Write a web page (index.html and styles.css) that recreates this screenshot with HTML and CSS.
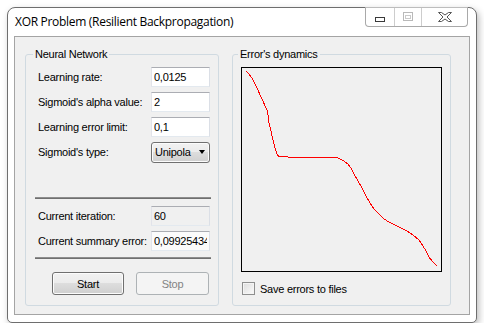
FILE: index.html
```html
<!DOCTYPE html>
<html lang="en">
<head>
<meta charset="UTF-8">
<title>XOR Problem (Resilient Backpropagation)</title>
<link rel="stylesheet" href="styles.css">
</head>
<body>

<div class="window">
  <div class="titlebar">
    <span class="title">XOR Problem (Resilient Backpropagation)</span>
    <div class="caption-btns">
      <span class="cbtn min"><svg width="10" height="5"><rect x="0.5" y="0.5" width="9" height="4" fill="#fff" stroke="#3a3a3a"/></svg></span>
      <span class="cbtn max"><svg width="10" height="9"><rect x="0.5" y="0.5" width="9" height="8" fill="none" stroke="#b9b9b9"/><rect x="2.5" y="3.5" width="5" height="3" fill="none" stroke="#cacaca"/></svg></span>
      <span class="cbtn close"><svg width="14" height="10"><polygon points="0.5,0.5 3.5,0.5 7,3 10.5,0.5 13.5,0.5 9,5 13.5,9.5 10.5,9.5 7,7 3.5,9.5 0.5,9.5 5,5" fill="#fff" stroke="#555"/></svg></span>
    </div>
  </div>

  <div class="client">
    <fieldset class="group net">
      <legend>Neural Network</legend>
      <div class="params">
        <label>Learning rate:</label><input class="tb" value="0,0125">
        <label>Sigmoid's alpha value:</label><input class="tb" value="2">
        <label>Learning error limit:</label><input class="tb" value="0,1">
        <label>Sigmoid's type:</label>
        <div class="combo"><span>Unipola</span><i class="arrow"></i></div>
      </div>
      <div class="sep first"></div>
      <div class="params status">
        <label>Current iteration:</label><input class="tb ro" value="60" readonly>
        <label>Current summary error:</label><input class="tb ro white" value="0,09925434" readonly>
      </div>
      <div class="sep second"></div>
      <div class="actions">
        <button class="btn start">Start</button>
        <button class="btn stop" disabled>Stop</button>
      </div>
    </fieldset>

    <fieldset class="group dyn">
      <legend>Error's dynamics</legend>
      <div class="chart">
        <svg width="199" height="203" shape-rendering="crispEdges">
          <polyline fill="none" stroke="#ff0000" stroke-width="1"
            points="4,3 7,6 10,10 13,16 16,22 18,27 21,33 23,38 25,42 26,47 27,55 29,63 31,72 33,80 35,86 37,89 40,88 46,89 84,89 96,90 102,93 106,96 109,100 112,106 116,113 120,120 124,128 128,135 132,141 137,146 142,151 147,154 153,157 159,160 165,163 171,167 177,172 181,178 184,183 187,189 190,193 195,198"/>
        </svg>
      </div>
      <label class="check"><span class="box"></span>Save errors to files</label>
    </fieldset>
  </div>
</div>

</body>
</html>
```

FILE: styles.css
```css
*{box-sizing:border-box}
body{margin:0;background:#fff;font-family:"Liberation Sans",Arial,sans-serif;font-size:11px;letter-spacing:-0.25px;color:#000}

.window{margin:7px 0 0 7px;width:470px;height:316px;background:#fff;border:1px solid #6e6e6e;border-radius:8px 8px 5px 5px;box-shadow:2px 3px 7px #0004;display:flex;flex-direction:column}

.titlebar{height:28px;display:flex;align-items:flex-start}
.title{font-family:"Open Sans",sans-serif;font-size:12px;letter-spacing:-0.3px;line-height:16px;padding:6px 0 0 7px;color:#000}
.caption-btns{margin:-1px 8px 0 auto;height:20px;display:flex;border:1px solid #a9a9a9;border-top-color:#bdbdbd;border-radius:0 0 4px 4px;background:#fff}
.cbtn{display:flex;justify-content:center;border-left:1px solid #cdcdcd}
.cbtn:first-child{border-left:0}
.cbtn.min{width:28px;padding:9px 0 0 0}
.cbtn.max{width:27px;padding:4px 0 0 0}
.cbtn.close{width:46px;padding:4px 0 0 0}

.client{flex:1;margin:0 6px 7px 6px;border:1px solid #a4a4a4;background:#f0f0f0;display:flex;align-items:flex-start;gap:13px;padding:11px 0 0 10px}

.group{margin:0;height:258px;border:1px solid #d0dae1;border-radius:3px;min-width:0}
.group legend{padding:0 2px;line-height:12px;font-size:11px}
.net{width:194px;padding:7px 8px 0 12px}
.net legend{margin-left:-5px}
.dyn{width:219px;padding:7px 8px 0 8px}
.dyn legend{margin-left:-3px}

.params{display:grid;grid-template-columns:1fr 59px;grid-auto-rows:20px;row-gap:5px;align-items:center}
.params label{white-space:nowrap}
.tb{width:59px;height:20px;margin:0;padding:0 2px;font:inherit;letter-spacing:inherit;color:#000;background:#fff;border:1px solid;border-color:#abadb3 #dbdfe6 #e3e9ef #e2e3ea;outline:0}
.tb.ro{background:#f0f0f0}
.tb.ro.white{background:#fbfbfb}

.combo{height:21px;display:flex;align-items:center;justify-content:space-between;padding:0 4px 0 3px;border:1px solid #707070;border-radius:3px;background:linear-gradient(#f2f2f2,#ebebeb 50%,#dddddd 50%,#cfcfcf);box-shadow:inset 0 0 0 1px #fcfcfc}
.arrow{width:0;height:0;border-top:4px solid #000;border-left:3.5px solid transparent;border-right:3.5px solid transparent}

.sep{height:2px;margin:0 -1px 0 -3px;border-top:1px solid #8d8d8d;border-bottom:1px solid #6f6f6f}
.sep.first{margin-top:35px}
.status{margin-top:7px}
.sep.second{margin-top:6px}

.actions{display:flex;gap:12px;margin-top:13px;padding-left:14px}
.btn{height:23px;margin:0;padding:0;font:inherit;letter-spacing:inherit;color:#000;border:1px solid #707070;border-radius:3px;background:linear-gradient(#f2f2f2,#ebebeb 50%,#dddddd 50%,#cfcfcf);box-shadow:inset 0 0 0 1px #fcfcfc}
.btn.start{width:72px}
.btn.stop{width:73px;color:#838383;border-color:#adb2b5;background:#f4f4f4;box-shadow:none}

.chart{width:201px;height:205px;border:1px solid #000;background:#f0f0f0}
.chart svg{display:block}

.check{display:flex;align-items:center;gap:5px;margin:10px 0 0 1px}
.box{width:13px;height:13px;border:1px solid #8e8f8f;background:linear-gradient(135deg,#dcdcdc,#fbfbfb);box-shadow:inset 0 0 0 1px #f4f4f4}
```
